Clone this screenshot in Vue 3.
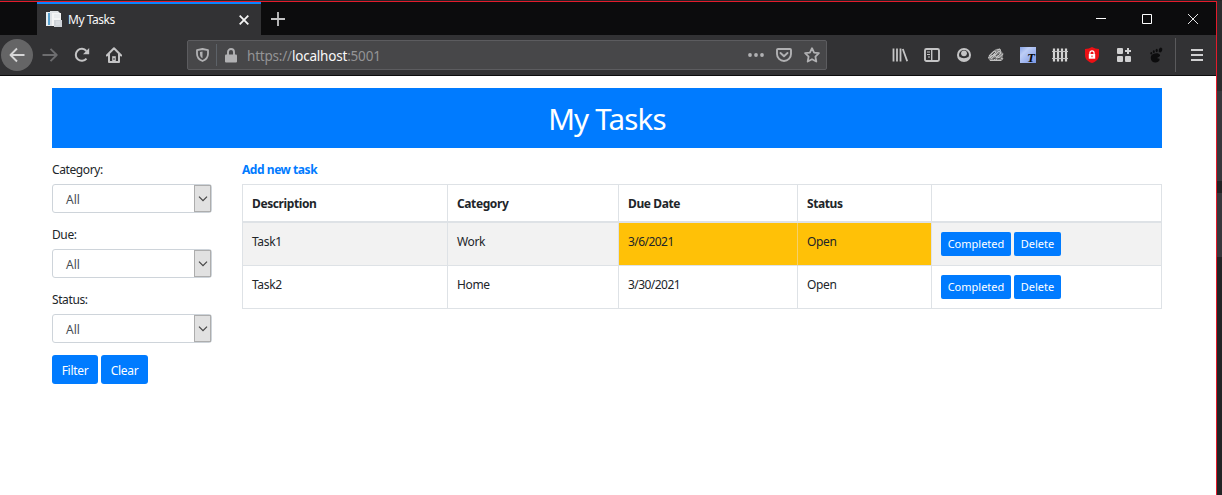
<script setup>
const filters = ['Category:', 'Due:', 'Status:']
const columns = ['Description', 'Category', 'Due Date', 'Status', '']
const tasks = [
  { description: 'Task1', category: 'Work', due: '3/6/2021', status: 'Open', overdue: true },
  { description: 'Task2', category: 'Home', due: '3/30/2021', status: 'Open', overdue: false },
]
</script>

<template>
  <div class="screen">
    <div class="window">
      <div class="tabs">
        <div class="tab">
          <svg class="favicon" width="17" height="17" viewBox="0 0 17 17">
            <path d="M0 1h6v14H0z" fill="#e8eef2" />
            <path d="M2 2h2v12H2z" fill="#5aa2cf" />
            <path d="M4 0h8l3 3v12H4z" fill="#e0e3e6" />
            <path d="M6 2h9v13H6z" fill="#f5f5f5" />
            <path d="M8 9h8v7H8z" fill="#cfd3d8" />
            <path d="M8 4h6M8 6h6M10 11h4M10 13h4" stroke="#e0e4e8" />
          </svg>
          <span class="tab-title">My Tasks</span>
          <svg class="tab-close" width="10" height="10" viewBox="0 0 10 10"><path d="M.7.7l8.6 8.6M9.3.7L.7 9.3" stroke="#f5f5f5" stroke-width="1.8" /></svg>
        </div>
        <svg class="new-tab" width="14" height="14" viewBox="0 0 14 14"><path d="M7 0v14M0 7h14" stroke="#c4c4c5" stroke-width="1.8" /></svg>
        <div class="controls">
          <svg width="10" height="10" viewBox="0 0 10 10"><path d="M0 4.5h10" stroke="#fff" /></svg>
          <svg width="10" height="10" viewBox="0 0 10 10"><path d="M.5.5h9v9h-9z" fill="none" stroke="#fff" /></svg>
          <svg width="10" height="10" viewBox="0 0 10 10"><path d="M0 0l10 10M10 0L0 10" stroke="#fff" stroke-width=".9" /></svg>
        </div>
      </div>

      <div class="toolbar">
        <div class="nav">
          <div class="back">
            <svg width="16" height="16" viewBox="0 0 16 16"><path d="M15.500 8H1.500M8 1.500L1.500 8 8 14.500" fill="none" stroke="#d6d6d7" stroke-width="1.900" stroke-linejoin="round" /></svg>
          </div>
          <svg width="16" height="16" viewBox="0 0 16 16"><path d="M.5 8h14M8.500 1.800L14.700 8l-6.200 6.200" fill="none" stroke="#6d6d6f" stroke-width="1.900" stroke-linejoin="round" /></svg>
          <svg width="16" height="16" viewBox="0 0 16 16"><path d="M12.500 11.600A6 6 0 1 1 12.400 4" fill="none" stroke="#c4c4c5" stroke-width="2" /><path d="M15.200 1v6.200H9z" fill="#c4c4c5" /></svg>
          <svg width="16" height="16" viewBox="0 0 16 16"><path d="M.8 8.500L8 1.300l7.200 7.200M3 7.200V15h10V7.200" fill="none" stroke="#c4c4c5" stroke-width="2" stroke-linejoin="round" stroke-linecap="round" /><path d="M6.200 15V9.200h3.600V15" fill="#c4c4c5" /><path d="M8 11v2" stroke="#323234" /></svg>
        </div>
        <div class="address">
          <svg width="13" height="14" viewBox="0 0 13 14"><path d="M6.500 1L12 2.200v3.600c0 3.500-1.800 5.800-5.500 7.200C2.800 11.600 1 9.300 1 5.800V2.200z" fill="none" stroke="#b1b1b3" stroke-width="1.800" stroke-linejoin="round" /><path d="M6.500 3.500v6.800C4.700 9.200 4 8 4 6V4z" fill="#b1b1b3" /></svg>
          <i class="address-rule"></i>
          <svg class="lock" width="12" height="15" viewBox="0 0 12 15"><path d="M3 7V4a3 3 0 0 1 6 0v3" fill="none" stroke="#b1b1b3" stroke-width="1.900" /><rect y="6.500" width="12" height="8" rx="1" fill="#b1b1b3" /></svg>
          <span class="url">https://<b>localhost</b>:5001</span>
          <div class="page-actions">
            <svg width="16" height="4" viewBox="0 0 16 4"><g fill="#b1b1b3"><circle cx="2" cy="2" r="1.900" /><circle cx="8" cy="2" r="1.900" /><circle cx="14" cy="2" r="1.900" /></g></svg>
            <svg width="16" height="14" viewBox="0 0 16 14"><path d="M2 1h12a1 1 0 0 1 1 1v4a7 7 0 0 1-14 0V2a1 1 0 0 1 1-1z" fill="none" stroke="#b1b1b3" stroke-width="1.900" /><path d="M4.500 5L8 8.300 11.500 5" fill="none" stroke="#b1b1b3" stroke-width="1.900" stroke-linecap="round" stroke-linejoin="round" /></svg>
            <svg width="16" height="16" viewBox="0 0 16 16"><path d="M8 1.200l2.100 4.400 4.800.6-3.500 3.400.9 4.900L8 12.200l-4.300 2.300.9-4.900L1.100 6.200l4.800-.6z" fill="none" stroke="#b1b1b3" stroke-width="1.800" stroke-linejoin="round" /></svg>
          </div>
        </div>
        <div class="tools">
          <svg width="16" height="16" viewBox="0 0 16 16"><path d="M1.500 1.500v13M5 1.500v13M8.500 1.500v13M10.800 2l4.400 12.200" stroke="#c4c4c5" stroke-width="1.800" fill="none" /></svg>
          <svg width="16" height="16" viewBox="0 0 16 16"><rect x="1" y="2" width="14" height="12" rx="1.500" fill="none" stroke="#c4c4c5" stroke-width="1.900" /><path d="M7.700 2v12" stroke="#c4c4c5" stroke-width="1.400" /><path d="M3 5h3M3 7.500h3M4 10h2" stroke="#c4c4c5" stroke-width="1.100" /></svg>
          <svg width="16" height="16" viewBox="0 0 16 16"><circle cx="8" cy="8" r="6" fill="none" stroke="#c4c4c5" stroke-width="2" /><circle cx="8" cy="6.300" r="2.900" fill="#c4c4c5" /><path d="M3 9.500q5 3.400 10 0Q12 14 8 14T3 9.500z" fill="#c4c4c5" /></svg>
          <svg width="16" height="16" viewBox="0 0 16 16"><path d="M1 8L4 5l4-3 4-.5 1 3 2.500 2-1 4 1 1-2 2.500H2l-2-3z" fill="#8a8a8a" /><path d="M1 9l5-5 2 1-6 6M3 12l8-8 2 2-7 7M8 13l7-6M9 3l3-1 1 3M0 11l5-3 4 2 6 2M2 13.500h11M5 7l6 2" fill="none" stroke="#cfcfcf" stroke-width=".8" /><path d="M4 8l3-3M8 9l3-2M9 12l4-1M5 12l3-1" stroke="#444" stroke-width=".9" /></svg>
          <svg width="16" height="16" viewBox="0 0 16 16"><defs><linearGradient id="sky" x2="1" y2="1"><stop stop-color="#86a2e6" /><stop offset=".3" stop-color="#bdcdf5" /><stop offset="1" stop-color="#7896e6" /></linearGradient></defs><path d="M0 0h16v16H0z" fill="url(#sky)" /><text x="7" y="14.500" class="t-glyph">T</text></svg>
          <svg width="16" height="16" viewBox="0 0 16 16"><path d="M2 1.500v13M6 1.500v13M10 1.500v13M14 1.500v13" stroke="#d4d4d4" stroke-width="2.200" /><path d="M0 4.500h16M0 11.500h16" stroke="#c4c4c5" stroke-width="1.200" /></svg>
          <svg width="16" height="16" viewBox="0 0 16 16"><path d="M8 0q3 2 7 2v6c0 4-2.700 6.500-7 8-4.300-1.500-7-4-7-8V2Q5 2 8 0z" fill="#ec1014" /><path d="M5.900 7.500V6a2.100 2.100 0 0 1 4.200 0v1.500" fill="none" stroke="#fff" stroke-width="1.200" /><path d="M4.800 7h6.400v4.700H4.800z" fill="#fff" /><path d="M8 8.500v1.700" stroke="#ec1014" /></svg>
          <svg width="16" height="16" viewBox="0 0 16 16"><g fill="#d0d0d1"><rect x="1" y="1" width="6" height="6" rx="1" /><rect x="1" y="9" width="6" height="6" rx="1" /><rect x="9" y="9" width="6" height="6" rx="1" /></g><path d="M12 1v6M9 4h6" stroke="#d0d0d1" stroke-width="2" /></svg>
          <svg width="16" height="16" viewBox="0 0 16 16"><g fill="#0c0c0d"><path d="M3 9c1-3 8-4 9-1 .5 2-3 2-2.500 3.200.5.800 1.500-.2 2 .8.500 2-2 3.500-4.500 3.500C4 15.500 2 12 3 9z" /><ellipse cx="12.500" cy="3" rx="1.700" ry="2.500" transform="rotate(20 12.500 3)" /><ellipse cx="8.700" cy="3.500" rx="1.100" ry="1.800" /><ellipse cx="5.800" cy="4.700" rx="1" ry="1.400" /><ellipse cx="3.300" cy="6.300" rx=".9" ry="1.200" /></g></svg>
        </div>
        <i class="menu-rule"></i>
        <svg class="menu" width="12" height="12" viewBox="0 0 12 12"><path d="M0 1h12M0 6h12M0 11h12" stroke="#d0d0d1" stroke-width="1.900" /></svg>
      </div>

      <main class="page">
        <h1><span>My Tasks</span></h1>
        <div class="content">
          <aside>
            <div v-for="name in filters" :key="name" class="field">
              <label>{{ name }}</label>
              <div class="select">
                <span>All</span>
                <div class="arrow"><svg width="10" height="6" viewBox="0 0 10 6"><path d="M1 .7l4 4 4-4" fill="none" stroke="#444" stroke-width="1.200" /></svg></div>
              </div>
            </div>
            <div class="filter-actions">
              <button class="filter">Filter</button>
              <button class="clear">Clear</button>
            </div>
          </aside>
          <section>
            <a class="add">Add new task</a>
            <div class="table">
              <div v-for="(c, i) in columns" :key="i" class="cell head">{{ c }}</div>
              <template v-for="t in tasks" :key="t.description">
                <div class="cell" :class="{ stripe: t.overdue }">{{ t.description }}</div>
                <div class="cell" :class="{ stripe: t.overdue }">{{ t.category }}</div>
                <div class="cell date" :class="{ warn: t.overdue }">{{ t.due }}</div>
                <div class="cell" :class="{ warn: t.overdue, last: t.overdue }">{{ t.status }}</div>
                <div class="cell actions" :class="{ stripe: t.overdue }">
                  <button class="complete">Completed</button>
                  <button class="delete">Delete</button>
                </div>
              </template>
            </div>
          </section>
        </div>
      </main>
    </div>
    <div class="desktop"></div>
  </div>
</template>

<style>
body { background: #fff; overflow: hidden; }
</style>

<style scoped>
* { box-sizing: border-box; }
.screen { display: flex; width: 1222px; height: 495px; padding-top: 1px; background: #252527; font-family: "Noto Sans", "Open Sans", sans-serif; font-size: 12px; color: #212529; }
svg { display: block; flex: none; }
.window { width: 1217px; height: 494px; border-top: 1px solid #e31b2b; border-right: 1px solid #e31b2b; background: #fff; }
.desktop { width: 5px; height: 494px; background: linear-gradient(#2b2b2d 0 90px, #37373c 90px 180px, #222224 180px 192px, #37373c 192px 256px, #232325 256px); }
.tabs { display: flex; align-items: center; height: 33px; padding-left: 37px; background: #0c0c0d; }
.tab { display: flex; align-items: center; width: 224px; height: 33px; padding: 0 12px 0 9px; border-top: 2px solid #0a84ff; background: #323234; color: #f9f9fa; }
.favicon { margin-right: -1px; }
.tab-title { margin-left: 6px; flex: 1; letter-spacing: -.45px; }
.new-tab { margin-left: 10px; }
.controls { display: flex; gap: 36px; margin-left: auto; margin-right: 18px; }
.toolbar { display: flex; align-items: center; height: 41px; background: #323234; border-bottom: 1px solid #0c0c0d; }
.nav { display: flex; align-items: center; gap: 16px; width: 187px; padding-left: 1px; }
.back { display: flex; align-items: center; justify-content: center; width: 32px; height: 32px; margin-right: -7px; border-radius: 50%; background: #656566; }
.address { display: flex; align-items: center; width: 640px; height: 30px; padding: 0 6px 0 8px; border: 1px solid #5c5c5f; border-radius: 2px; background: #474749; }
.address-rule { width: 1px; height: 22px; margin-left: 7px; background: #5d6268; }
.lock { margin-left: 8px; }
.url { margin-left: 10px; padding-top: 1px; font-size: 13.500px; letter-spacing: -.2px; color: #949496; }
.url b { font-weight: 400; color: #f9f9fa; }
.page-actions { display: flex; align-items: center; gap: 12px; margin-left: auto; }
.tools { display: flex; gap: 16px; margin-left: 65px; }
.t-glyph { font: italic bold 13px "Liberation Serif", serif; fill: #080808; }
.menu-rule { width: 1px; height: 34px; margin-left: 11px; background: #5a5a5c; }
.menu { margin-left: 15px; }
.page { padding: 12px 54px 0 52px; }
h1 { display: flex; justify-content: center; height: 60px; margin: 0; background: #007bff; color: #fff; font-size: 29.500px; font-weight: 400; line-height: 62px; letter-spacing: -.8px; }
.content { display: flex; gap: 30px; padding-top: 12px; }
aside { width: 160px; }
.field { height: 65px; }
label { display: block; height: 24px; line-height: 20px; letter-spacing: -.4px; }
.select { display: flex; justify-content: space-between; height: 29px; padding-left: 13px; border: 1px solid #ced4da; border-radius: 3px; line-height: 29px; color: #495057; }
.arrow { display: flex; align-items: center; justify-content: center; width: 17px; height: 27px; border: 1px solid #adadad; background: #e1e1e1; }
.filter-actions { display: flex; gap: 3px; }
button { height: 24px; padding: 0; border: 0; border-radius: 2px; background: #007bff; color: #fff; font: 11px/24px "Noto Sans", sans-serif; white-space: nowrap; }
.filter, .clear { height: 29px; font-size: 12px; line-height: 31px; letter-spacing: -.3px; border-radius: 3px; }
.filter { width: 46px; }
.clear { width: 47px; }
section { width: 920px; }
.add { display: block; height: 24px; line-height: 20px; font-weight: 700; color: #007bff; letter-spacing: -.45px; }
.table { display: grid; grid-template-columns: 205px 171px 179px 134px 230px; grid-template-rows: 38px 43px 43px; border-top: 1px solid #dee2e6; border-left: 1px solid #dee2e6; }
.cell { padding: 9px 9px 0; border-right: 1px solid #dee2e6; border-bottom: 1px solid #dee2e6; line-height: 20px; letter-spacing: -.35px; }
.head { border-bottom-width: 2px; font-weight: 700; letter-spacing: -.4px; }
.date { letter-spacing: -.55px; }
.stripe { background: #f2f2f2; }
.warn { background: #ffc107; border-right-color: #f5d06a; }
.last { border-right-color: #dee2e6; }
.actions { display: flex; gap: 3px; }
.complete { width: 70px; }
.delete { width: 47px; }
</style>
